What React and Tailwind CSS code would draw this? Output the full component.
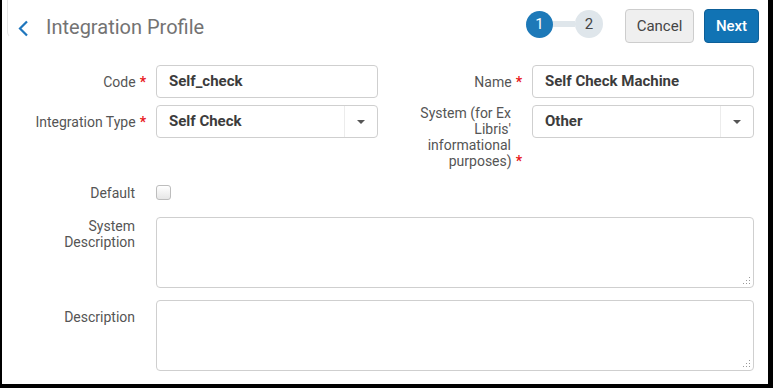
import { useState } from 'react';

const Req = () => (
  <span className="ml-[4px] -mr-[11px] font-bold text-[#e8161b]">*</span>
);

const Label = ({ children, required }) => (
  <div className="w-[154px] shrink-0 pl-[16px] pr-[21px] min-h-[33px] flex items-center text-[14px] leading-[16px] text-[#555]">
    <span className="block w-full text-right">
      {children}
      {required && <Req />}
    </span>
  </div>
);

const TextInput = ({ value }) => (
  <div className="w-[222px] h-[33px] shrink-0 rounded-[4px] border border-[#cfcfcf] bg-white px-[12px] flex items-center text-[15px] font-bold text-[#3c3c3c]">
    {value}
  </div>
);

const SelectBox = ({ value }) => (
  <div className="w-[222px] h-[33px] shrink-0 rounded-[4px] border border-[#cfcfcf] bg-white flex items-stretch text-[15px] font-bold text-[#3c3c3c]">
    <div className="flex-1 px-[12px] flex items-center">{value}</div>
    <div className="w-[33px] border-l border-[#ececec] flex items-center justify-center">
      <svg width="8" height="4" viewBox="0 0 8 4">
        <path d="M0 0 L8 0 L4 4 Z" fill="#555" />
      </svg>
    </div>
  </div>
);

const Grip = () => (
  <svg className="absolute right-[3px] bottom-[3px]" width="9" height="9" viewBox="0 0 9 9">
    <rect x="7" y="1" width="1" height="1" fill="#9a9a9a" />
    <rect x="4" y="4" width="1" height="1" fill="#9a9a9a" />
    <rect x="7" y="4" width="1" height="1" fill="#9a9a9a" />
    <rect x="1" y="7" width="1" height="1" fill="#9a9a9a" />
    <rect x="4" y="7" width="1" height="1" fill="#9a9a9a" />
    <rect x="7" y="7" width="1" height="1" fill="#9a9a9a" />
  </svg>
);

const TextArea = ({ value, onChange }) => (
  <div className="relative w-[598px] h-[71px] shrink-0">
    <textarea
      value={value}
      onChange={onChange}
      className="w-full h-full resize-none rounded-[4px] border border-[#cfcfcf] bg-white outline-none px-[12px] py-[6px] text-[15px]"
    />
    <Grip />
  </div>
);

export default function App() {
  const [sysDesc, setSysDesc] = useState('');
  const [desc, setDesc] = useState('');
  const [isDefault, setIsDefault] = useState(false);

  return (
    <div className="w-[773px] h-[388px] bg-black pl-[2px] pr-[5px] pb-[4px] font-['Roboto',sans-serif]">
      <div className="relative w-full h-full bg-white overflow-hidden">
        {/* page text above, cut off */}
        <div className="h-[3px] overflow-hidden pl-[33px]">
          <div className="-mt-[13px] text-[15px] leading-[16px] font-['Liberation_Serif',serif] text-[#444] tracking-[1px]">
            mmm mnm mmm
          </div>
        </div>

        {/* Header */}
        <div className="flex items-start h-[52px] -mt-[3px]">
          <div className="ml-[5px] h-[38px] w-[40px] border-l border-b border-[#e6e6e6] rounded-bl-[6px] border-b-transparent flex">
            <svg className="mt-[20px] ml-[9px]" width="12" height="17" viewBox="0 0 12 17">
              <path d="M10 1.5 L3 8.5 L10 15.5" fill="none" stroke="#1f76bd" strokeWidth="2.2" />
            </svg>
          </div>
          <div className="ml-[-1px] mt-[15px] text-[20px] leading-[24px] text-[#737373]">
            Integration Profile
          </div>

          <div className="ml-auto mt-[10px] flex items-center">
            <div className="w-[27px] h-[27px] rounded-full bg-[#1d79b8] text-white text-[15px] flex items-center justify-center">
              1
            </div>
            <div className="w-[22px] h-[6px] bg-[#dfe6eb]" />
            <div className="w-[28px] h-[28px] rounded-full bg-[#dfe6eb] text-[#444] text-[15px] flex items-center justify-center">
              2
            </div>
          </div>

          <button className="ml-[22px] mt-[9px] w-[69px] h-[34px] rounded-[4px] border border-[#cdcdcd] bg-[#efefef] text-[15px] text-[#444]">
            Cancel
          </button>
          <button className="ml-[10px] mr-[9px] mt-[9px] w-[55px] h-[34px] rounded-[4px] border border-[#0d5f98] bg-[#1173b4] text-[15px] font-medium text-white">
            Next
          </button>
        </div>

        {/* Form */}
        <div className="mt-[13px]">
          <div className="flex items-start">
            <div className="flex items-start">
              <Label required>Code</Label>
              <TextInput value="Self_check" />
            </div>
            <div className="flex items-start">
              <Label required>Name</Label>
              <TextInput value="Self Check Machine" />
            </div>
          </div>

          <div className="flex items-start mt-[7px]">
            <div className="flex items-start">
              <Label required>Integration Type</Label>
              <SelectBox value="Self Check" />
            </div>
            <div className="flex items-start">
              <Label required>System (for Ex Libris' informational purposes)</Label>
              <SelectBox value="Other" />
            </div>
          </div>

          <div className="flex items-center mt-[7px]">
            <Label>Default</Label>
            <button
              onClick={() => setIsDefault(!isDefault)}
              className="w-[15px] h-[15px] rounded-[3px] border border-[#bdbdbd] bg-gradient-to-b from-white to-[#e6e6e6]"
            />
          </div>

          <div className="flex items-start mt-[8px]">
            <Label>System Description</Label>
            <TextArea value={sysDesc} onChange={(e) => setSysDesc(e.target.value)} />
          </div>

          <div className="flex items-start mt-[12px]">
            <Label>Description</Label>
            <TextArea value={desc} onChange={(e) => setDesc(e.target.value)} />
          </div>
        </div>
      </div>
    </div>
  );
}
